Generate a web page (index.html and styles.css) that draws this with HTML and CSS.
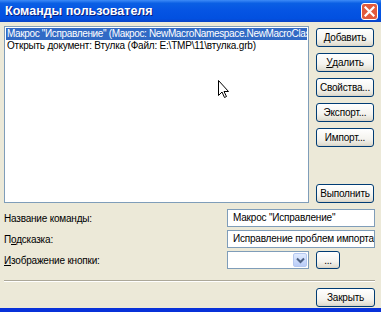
FILE: index.html
```html
<html>
<head>
	<meta http-equiv="Content-Type" content="text/html; charset=utf-8" />
	<link rel="stylesheet" href="styles.css">
</head>
<body>
<div class="window">
	<div class="titlebar">
		<span class="title">Команды пользователя</span>
		<span class="close">
			<svg width="11" height="11" viewBox="0 0 11 11"><path d="M1.5 1.5 L9.5 9.5 M9.5 1.5 L1.5 9.5" stroke="#fff" stroke-width="2.2" stroke-linecap="square"/></svg>
		</span>
	</div>
	<div class="client">
		<div class="top">
			<div class="list">
				<div class="row sel">Макрос "Исправление" (Макрос: NewMacroNamespace.NewMacroClass.Исправление)</div>
				<div class="row">Открыть документ: Втулка (Файл: E:\TMP\11\втулка.grb)</div>
				<svg class="cursor" width="12" height="19" viewBox="0 0 12 19"><path d="M0.5 0.5 L0.5 15.5 L4 12 L6.5 17.5 L8.5 16.5 L6 11.5 L10.5 11.5 Z" fill="#fff" stroke="#000" stroke-width="1"/></svg>
			</div>
			<div class="buttons">
				<div class="btn"><u>Д</u>обавить</div>
				<div class="btn"><u>У</u>далить</div>
				<div class="btn">Свойства...</div>
				<div class="btn">Экспорт...</div>
				<div class="btn">Импорт...</div>
				<div class="btn run">Выполнить</div>
			</div>
		</div>
		<div class="fields">
			<div class="field">
				<span class="label">Название команды:</span>
				<div class="input">Макрос "Исправление"</div>
			</div>
			<div class="field">
				<span class="label">П<u>о</u>дсказка:</span>
				<div class="input">Исправление проблем импорта</div>
			</div>
			<div class="field">
				<span class="label"><u>И</u>зображение кнопки:</span>
				<div class="combo">
					<span class="drop">
						<svg width="9" height="7" viewBox="0 0 9 7"><path d="M1 1.5 L4.5 5 L8 1.5" fill="none" stroke="#4d6185" stroke-width="2"/></svg>
					</span>
				</div>
				<div class="btn dots">...</div>
			</div>
		</div>
		<div class="sep"></div>
		<div class="bottom">
			<div class="btn">Закрыть</div>
		</div>
	</div>
</div>
</body>
</html>
```

FILE: styles.css
```css
body {margin:0; font-family:"Liberation Sans", Arial, sans-serif; font-size:10px; letter-spacing:-0.2px; color:#000;}
.window {width:381px; height:312px; background:#ECE9D8; border-bottom:4px solid #0831D9; box-sizing:border-box; display:flex; flex-direction:column;}
.titlebar {height:22px; display:flex; align-items:center; justify-content:space-between; padding:0 3px 0 5px;
	background:linear-gradient(#3D8BF7 0%, #0A5FE4 15%, #0554E3 50%, #0250E0 85%, #0A43C6 100%);}
.title {color:#fff; font-weight:bold; font-size:12.5px; letter-spacing:0; text-shadow:1px 1px #0A1F80;}
.close {width:17px; height:17px; border:1px solid #fff; border-radius:3px; box-sizing:border-box; background:#E25B3D;
	display:flex; align-items:center; justify-content:center;}
.client {flex:1; padding:4px 6px 0 4px; display:flex; flex-direction:column;}
.top {display:flex; height:177px;}
.list {position:relative; width:305px; border:1px solid #7F9DB9; background:#fff; box-sizing:border-box; overflow:hidden; padding:1px;}
.row {height:12px; line-height:12px; white-space:nowrap; padding-left:1px;}
.sel {background:#316AC5; color:#fff; letter-spacing:-0.35px;}
.cursor {position:absolute; left:213px; top:53px;}
.buttons {margin-left:7px; width:58px; display:flex; flex-direction:column; gap:6px; padding-top:2px;}
.btn {height:19px; box-sizing:border-box; border:1px solid #003C74; border-radius:3px; display:flex; align-items:center; justify-content:center;
	background:linear-gradient(#FFFFFF 0%, #F4F3EE 60%, #E3E0D4 90%, #D6D0C5 100%);}
.run {margin-top:auto;}
.fields {display:flex; flex-direction:column; gap:3px; margin-top:6px;}
.field {display:flex; align-items:center; height:18px;}
.label {width:223px;}
.input {width:148px; height:18px; box-sizing:border-box; border:1px solid #7F9DB9; background:#fff; padding-left:5px; line-height:16px; white-space:nowrap; overflow:hidden;}
.combo {width:82px; height:18px; box-sizing:border-box; border:1px solid #7F9DB9; background:#fff; display:flex; justify-content:flex-end; padding:1px;}
.drop {width:14px; height:14px; border-radius:2px; background:linear-gradient(#E0EBFF, #B9CCF7); border:1px solid #B5C8F1; box-sizing:border-box; display:flex; align-items:center; justify-content:center;}
.dots {width:24px; margin-left:7px; height:18px;}
.sep {margin-top:11px; border-top:1px solid #ACA899; border-bottom:1px solid #fff;}
.bottom {display:flex; justify-content:flex-end; margin-top:6px;}
.bottom .btn {width:59px;}
```
